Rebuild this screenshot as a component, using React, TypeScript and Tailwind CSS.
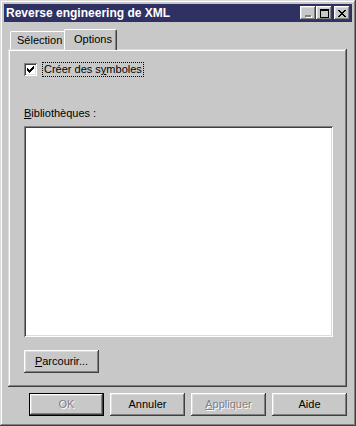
import React from "react";

const raised =
  "shadow-[inset_-1px_-1px_#404040,inset_1px_1px_#ffffff,inset_-2px_-2px_#808080,inset_2px_2px_#dcdcdc]";
const frame =
  "shadow-[inset_-1px_-1px_#404040,inset_1px_1px_#dcdcdc,inset_-2px_-2px_#808080,inset_2px_2px_#ffffff]";
const sunken =
  "shadow-[inset_1px_1px_#808080,inset_-1px_-1px_#ffffff,inset_2px_2px_#404040,inset_-2px_-2px_#dcdcdc]";

const disabledText = "text-[#808080] [text-shadow:1px_1px_0_#ffffff]";

const CloseGlyph = () => (
  <svg width="8" height="7" viewBox="0 0 8 7" shapeRendering="crispEdges">
    <path
      d="M0 0h2v1H0zM6 0h2v1H6zM1 1h2v1H1zM5 1h2v1H5zM2 2h4v1H2zM3 3h2v1H3zM2 4h4v1H2zM1 5h2v1H1zM5 5h2v1H5zM0 6h2v1H0zM6 6h2v1H6z"
      fill="#000"
    />
  </svg>
);

const MaxGlyph = () => (
  <svg width="9" height="9" viewBox="0 0 9 9" shapeRendering="crispEdges">
    <path d="M0 0h9v2H0zM0 2h1v7H0zM8 2h1v7H8zM0 8h9v1H0z" fill="#000" />
  </svg>
);

const MinGlyph = () => (
  <svg width="7" height="3" viewBox="0 0 7 3" shapeRendering="crispEdges">
    <path d="M1 1h6v2H1z" fill="#ffffff" />
    <path d="M0 0h6v2H0z" fill="#808080" />
  </svg>
);

const CheckGlyph = () => (
  <svg width="7" height="7" viewBox="0 0 7 7" shapeRendering="crispEdges">
    <path
      d="M6 0h1v1H6zM5 1h2v1H5zM0 2h1v1H0zM4 2h3v1H4zM0 3h2v1H0zM3 3h3v1H3zM0 4h5v1H0zM1 5h3v1H1zM2 6h1v1H2z"
      fill="#000"
    />
  </svg>
);

const TitleButton: React.FC<{ children: React.ReactNode }> = ({ children }) => (
  <div
    className={`w-[16px] h-[14px] bg-[#c8c8c8] ${raised} flex items-center justify-center`}
  >
    {children}
  </div>
);

const PushButton: React.FC<{
  children: React.ReactNode;
  disabled?: boolean;
  isDefault?: boolean;
}> = ({ children, disabled, isDefault }) => (
  <div
    className={`w-[75px] h-[23px] bg-[#c8c8c8] ${
      isDefault ? "border border-black" : ""
    } flex`}
  >
    <div
      className={`flex-1 ${raised} flex items-center justify-center ${
        disabled ? disabledText : "text-black"
      }`}
    >
      {children}
    </div>
  </div>
);

export default function App() {
  return (
    <div className="font-['Liberation_Sans',Arial,sans-serif] text-[11px] leading-[13px] text-black">
      <div
        className={`w-[356px] h-[426px] bg-[#c8c8c8] p-[4px] flex flex-col ${frame}`}
      >
        {/* title bar */}
        <div className="h-[18px] bg-[#2f3163] flex items-center pl-[2px] pr-[2px]">
          <span className="text-white font-bold text-[12px] flex-1">
            Reverse engineering de XML
          </span>
          <TitleButton>
            <div className="mt-[6px] ml-[1px]">
              <MinGlyph />
            </div>
          </TitleButton>
          <TitleButton>
            <MaxGlyph />
          </TitleButton>
          <div className="w-[2px]" />
          <TitleButton>
            <CloseGlyph />
          </TitleButton>
        </div>

        {/* tabs */}
        <div className="mt-[7px] h-[20px] pl-[6px] flex items-end">
          <div className="w-[56px] h-[18px] border-t border-l border-white shadow-[inset_-1px_0_#808080] rounded-tl-[2px] flex items-center pl-[6px]">
            Sélection
          </div>
          <div className="relative z-10 -ml-[2px] -mb-[1px] w-[53px] h-[21px] bg-[#c8c8c8] border-t border-l border-white border-r border-r-[#404040] shadow-[inset_-1px_0_#808080] rounded-tl-[2px] rounded-tr-[2px] flex items-start pt-[3px] pl-[9px]">
            Options
          </div>
        </div>

        {/* panel */}
        <div
          className={`ml-[4px] w-[339px] h-[338px] flex flex-col pl-[16px] ${frame}`}
        >
          <div className="mt-[13px] h-[15px] flex items-center">
            <div
              className={`w-[13px] h-[13px] bg-white ${sunken} flex items-center justify-center`}
            >
              <CheckGlyph />
            </div>
            <div className="ml-[5px] h-[15px] border border-dotted border-black px-[1px] flex items-center">
              Créer des s<span className="underline underline-offset-[1px]">y</span>mboles
            </div>
          </div>

          <div className="mt-[30px] h-[13px]">
            <span className="underline underline-offset-[1px]">B</span>ibliothèques :
          </div>

          <div className={`mt-[6px] w-[309px] h-[211px] bg-white ${sunken}`} />

          <div className="mt-[13px]">
            <PushButton>
              <span>
                <span className="underline underline-offset-[1px]">P</span>arcourir...
              </span>
            </PushButton>
          </div>
        </div>

        {/* bottom buttons */}
        <div className="mt-[6px] mr-[5px] flex justify-end gap-[6px]">
          <PushButton disabled isDefault>
            OK
          </PushButton>
          <PushButton>Annuler</PushButton>
          <PushButton disabled>
            <span>
              <span className="underline underline-offset-[1px]">A</span>ppliquer
            </span>
          </PushButton>
          <PushButton>Aide</PushButton>
        </div>
      </div>
    </div>
  );
}
